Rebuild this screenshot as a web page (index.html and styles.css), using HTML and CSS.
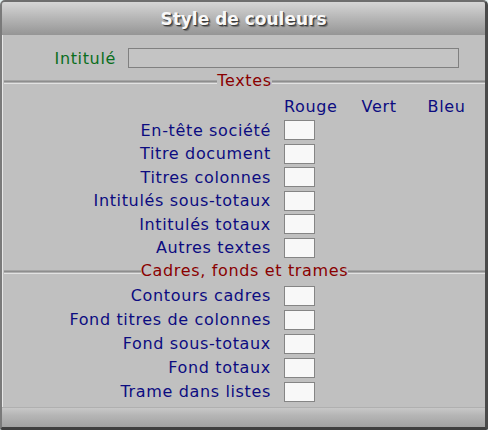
FILE: index.html
```html
<!DOCTYPE html>
<html lang="fr">
<head>
<meta charset="utf-8">
<title>Style de couleurs</title>
<link rel="stylesheet" href="styles.css">
</head>
<body>
<div class="window">
  <div class="titlebar">Style de couleurs</div>
  <div class="content">
    <div class="field-row">
      <label class="field-label">Intitulé</label>
      <div class="text-input"></div>
    </div>
    <div class="section"><span class="rule"></span><span class="legend">Textes</span><span class="rule"></span></div>
    <div class="col-heads">
      <span class="head rouge">Rouge</span>
      <span class="head vert">Vert</span>
      <span class="head bleu">Bleu</span>
    </div>
    <div class="rows rows-a">
      <div class="row"><span class="lbl">En-tête société</span><span class="box"></span></div>
      <div class="row"><span class="lbl">Titre document</span><span class="box"></span></div>
      <div class="row"><span class="lbl">Titres colonnes</span><span class="box"></span></div>
      <div class="row"><span class="lbl">Intitulés sous-totaux</span><span class="box"></span></div>
      <div class="row"><span class="lbl">Intitulés totaux</span><span class="box"></span></div>
      <div class="row"><span class="lbl">Autres textes</span><span class="box"></span></div>
    </div>
    <div class="section section-b"><span class="rule"></span><span class="legend">Cadres, fonds et trames</span><span class="rule"></span></div>
    <div class="rows rows-b">
      <div class="row"><span class="lbl">Contours cadres</span><span class="box"></span></div>
      <div class="row"><span class="lbl">Fond titres de colonnes</span><span class="box"></span></div>
      <div class="row"><span class="lbl">Fond sous-totaux</span><span class="box"></span></div>
      <div class="row"><span class="lbl">Fond totaux</span><span class="box"></span></div>
      <div class="row"><span class="lbl">Trame dans listes</span><span class="box"></span></div>
    </div>
  </div>
  <div class="bottombar"></div>
</div>
</body>
</html>
```
FILE: styles.css
```css
html, body {
  margin: 0;
  padding: 0;
  background: #e4f0f0;
}
.window {
  width: 488px;
  height: 430px;
  box-sizing: border-box;
  border-top: 2px solid #6e6e6e;
  border-left: 2px solid #7a7a7a;
  border-right: 3px solid #4a4a4a;
  border-bottom: 3px solid #404040;
  border-radius: 5px 5px 2px 2px;
  background: #c0c0c0;
  display: flex;
  flex-direction: column;
  font-family: "DejaVu Sans", Verdana, sans-serif;
  font-size: 16px;
  letter-spacing: 0.65px;
  overflow: hidden;
}
.titlebar {
  height: 33px;
  flex: none;
  background: linear-gradient(#d6d6d6, #b8b8b8 45%, #959595);
  color: #f8f8f8;
  font-weight: bold;
  font-size: 17px;
  letter-spacing: 0;
  text-align: center;
  line-height: 34px;
  text-shadow: 1px 1px 0 #3a3a3a, 2px 2px 1px rgba(0,0,0,0.35);
}
.content {
  flex: 1;
  display: flex;
  flex-direction: column;
  box-shadow: inset 1px 0 0 #e8e8e8;
}
.field-row {
  display: flex;
  align-items: center;
  margin-top: 13px;
  height: 20px;
}
.field-label {
  width: 114px;
  text-align: right;
  color: #0a6e1e;
}
.text-input {
  margin-left: 12px;
  width: 329px;
  height: 18px;
  border: 1px solid #808080;
  background: #c4c4c4;
}
.section {
  display: flex;
  align-items: center;
  margin-top: 3px;
  height: 20px;
  padding: 0 0 0 2px;
}
.section-b {
  margin-top: 4px;
}
.rule {
  flex: 1;
  height: 4px;
  background: linear-gradient(#a4a4a4 0, #a4a4a4 1px, #8e8e8e 1px, #8e8e8e 2px, #b0b0b0 2px, #b0b0b0 3px, #e2e2e2 3px);
  margin-top: 1px;
}
.legend {
  color: #8a0000;
  line-height: 18px;
  margin-top: -1px;
}
.col-heads {
  display: flex;
  height: 24px;
  align-items: center;
  padding-left: 282px;
  margin-top: 3px;
  color: #0c0c80;
}
.head.vert { margin-left: 24px; }
.head.bleu { margin-left: 31px; }
.rows {
  display: flex;
  flex-direction: column;
}
.rows-a {
  margin-top: 2px;
  gap: 3.6px;
}
.rows-b {
  margin-top: 4px;
  gap: 4px;
}
.row {
  display: flex;
  align-items: center;
  height: 20px;
}
.lbl {
  width: 269px;
  text-align: right;
  color: #0c0c80;
}
.box {
  margin-left: 13px;
  width: 29px;
  height: 18px;
  border: 1px solid #858585;
  background: #f8f8f8;
}
.bottombar {
  height: 20px;
  flex: none;
  background: linear-gradient(#cacaca, #b6b6b6 40%, #a2a2a2);
  box-shadow: inset 0 1px 0 #b0b0b0;
}
```
